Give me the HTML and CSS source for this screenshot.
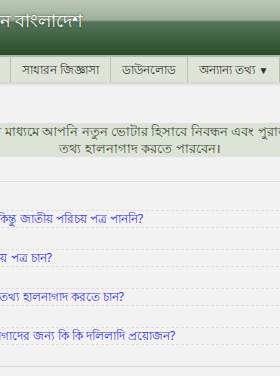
FILE: index.html
```html
<!DOCTYPE html>
<html lang="bn">
<head>
    <meta charset="UTF-8">
    <meta name="viewport" content="width=device-width, initial-scale=1.0">
    <title>নির্বাচন কমিশন বাংলাদেশ</title>
    <link rel="stylesheet" href="styles.css">
</head>
<body>
    <div class="page">
        <div class="header">
            <h1 class="site-title">নির্বাচন কমিশন বাংলাদেশ</h1>
        </div>

        <ul class="nav">
            <li><a href="#">প্রথম পাতা</a></li>
            <li><a href="#">নিবন্ধন</a></li>
            <li><a href="#">সাধারন জিজ্ঞাসা</a></li>
            <li><a href="#">ডাউনলোড</a></li>
            <li><a href="#">অন্যান্য তথ্য <span class="arrow">▼</span></a></li>
        </ul>

        <div class="content">
            <p class="intro">এর মাধ্যমে আপনি নতুন ভোটার হিসাবে নিবন্ধন এবং পুরাতন<br>তথ্য হালনাগাদ করতে পারবেন।</p>

            <div class="faq">
                <div class="faq-item"><a href="#">আপনি কি ভোটার হয়েছেন কিন্তু জাতীয় পরিচয় পত্র পাননি?</a></div>
                <div class="faq-item"><a href="#">আপনি কি নতুন একটি পরিচয় পত্র চান?</a></div>
                <div class="faq-item"><a href="#">আপনি কি আপনার ভোটার তথ্য হালনাগাদ করতে চান?</a></div>
                <div class="faq-item"><a href="#">আপনার ভোটার তথ্য হালনাগাদের জন্য কি কি দলিলাদি প্রয়োজন?</a></div>
            </div>
        </div>
    </div>
</body>
</html>
```

FILE: styles.css
```css
html, body {
    margin: 0;
    padding: 0;
}
body {
    background: #f2f2f2;
    font-family: "Noto Sans", sans-serif;
    display: flex;
    justify-content: center;
    overflow: hidden;
}
.page {
    width: 538px;
    flex-shrink: 0;
}
.header {
    height: 55px;
    background: linear-gradient(to bottom, #bcc7b8 0%, #9fb09b 36%, #56765a 40%, #3d613f 70%, #2a4d2c 100%);
    border-bottom: 2px solid #a9b8a3;
}
.site-title {
    margin: 0;
    padding: 7px 0 0 33px;
    font-size: 18px;
    font-weight: normal;
    color: #fff;
    text-shadow: 0 0 3px #2a3a28;
}
.nav {
    list-style: none;
    margin: 0;
    padding: 0 0 0 10px;
    display: flex;
    height: 25px;
    background: #dfe4d8;
    box-shadow: 0 2px 3px #cfcfcf;
}
.nav li {
    border-right: 1px solid #b9c1b1;
}
.nav a {
    display: block;
    padding: 0 11px;
    line-height: 25px;
    font-size: 12px;
    color: #333;
    text-decoration: none;
}
.nav .arrow {
    font-size: 10px;
}
.content {
    padding-top: 41px;
}
.intro {
    margin: 0 0 24px;
    padding: 0 20px;
    background: #dde3d7;
    color: #3f4c38;
    font-size: 13px;
    line-height: 17px;
    text-align: center;
}
.faq {
    border-top: 1px solid #dcdcdc;
    border-bottom: 1px solid #d8d8d8;
    padding-top: 28px;
}
.faq-item {
    border-top: 1px dashed #dedede;
    border-bottom: 1px dashed #dedede;
    margin-bottom: 21px;
    font-size: 12px;
    line-height: 16px;
}
.faq-item a {
    color: #3535dd;
    text-decoration: none;
}
```
